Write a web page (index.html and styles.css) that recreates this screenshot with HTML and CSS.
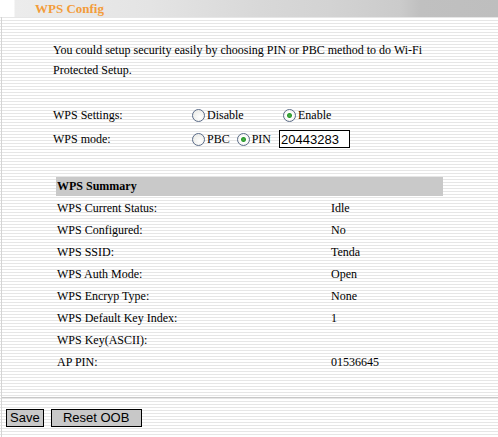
FILE: index.html
```html
<!DOCTYPE html>
<html>
<head lang="en">
    <meta charset="UTF-8">
    <title>WPS Config</title>
    <link rel="stylesheet" href="styles.css">
</head>
<body>
<div id="title">
    <span class="title-text">WPS Config</span>
</div>
<div id="main">
    <p class="intro">You could setup security easily by choosing PIN or PBC method to do Wi-Fi<br>Protected Setup.</p>
    <div class="settings">
        <div class="row">
            <span class="label">WPS Settings:</span>
            <label class="opt wide"><input type="radio" name="wps"><span>Disable</span></label>
            <label class="opt"><input type="radio" name="wps" checked><span>Enable</span></label>
        </div>
        <div class="row">
            <span class="label">WPS mode:</span>
            <label class="opt"><input type="radio" name="mode"><span>PBC</span></label>
            <label class="opt"><input type="radio" name="mode" checked><span>PIN</span></label>
            <input class="pin" type="text" value="20443283">
        </div>
    </div>
    <table class="summary">
        <tr><th colspan="2">WPS Summary</th></tr>
        <tr><td class="key">WPS Current Status:</td><td>Idle</td></tr>
        <tr><td class="key">WPS Configured:</td><td>No</td></tr>
        <tr><td class="key">WPS SSID:</td><td>Tenda</td></tr>
        <tr><td class="key">WPS Auth Mode:</td><td>Open</td></tr>
        <tr><td class="key">WPS Encryp Type:</td><td>None</td></tr>
        <tr><td class="key">WPS Default Key Index:</td><td>1</td></tr>
        <tr><td class="key">WPS Key(ASCII):</td><td></td></tr>
        <tr><td class="key">AP PIN:</td><td>01536645</td></tr>
    </table>
    <div class="buttons">
        <button class="btn">Save</button>
        <button class="btn reset">Reset OOB</button>
    </div>
</div>
</body>
</html>
```

FILE: styles.css
```css
*{
    margin: 0;
    padding: 0;
}
body{
    font-family: "Liberation Serif", "Times New Roman", serif;
    font-size: 12px;
    color: #000;
    background: repeating-linear-gradient(to bottom, #ffffff 0, #ffffff 2px, #e6e6e6 2px, #e6e6e6 3px);
    height: 437px;
    overflow: hidden;
}
#title{
    height: 17px;
    padding-left: 35px;
    background: linear-gradient(to right, #ffffff 0, #ffffff 14px, #ececec 15px, #e4e4e4 150px, #d8d8d8 260px, #d3d3d3 330px, #cbcbcb 400px, #c0c0c0 420px, #bebebe 498px);
}
.title-text{
    display: inline-block;
    font-weight: bold;
    font-size: 13px;
    line-height: 17px;
    color: #f39c3a;
}
#main{
    border-left: 1px solid #d4d4d4;
    margin-left: 1px;
    height: 420px;
}
.intro{
    padding: 23px 0 0 51px;
    line-height: 20px;
}
.settings{
    padding: 23px 0 0 51px;
}
.row{
    display: flex;
    align-items: center;
    height: 24px;
}
.label{
    width: 139px;
}
.opt{
    display: flex;
    align-items: center;
    margin-right: 7px;
}
.opt.wide{
    width: 91px;
    margin-right: 0;
}
.opt input{
    -webkit-appearance: none;
    appearance: none;
    width: 13px;
    height: 13px;
    border: 1px solid #5a6b88;
    border-radius: 50%;
    background: radial-gradient(circle at 60% 65%, #ffffff 0, #e6e6e0 100%);
    margin-right: 2px;
    box-sizing: border-box;
}
.opt input:checked{
    background: radial-gradient(circle, #4cb14c 0, #2c9a2c 2px, #ffffff 3px, #e8e8e2 100%);
}
.pin{
    width: 71px;
    height: 18px;
    box-sizing: border-box;
    border: 1px solid #000;
    font-family: "Liberation Sans", Arial, sans-serif;
    font-size: 13px;
    padding-left: 1px;
    margin-left: 1px;
    background: #fff;
}
.summary{
    margin: 26px 0 0 54px;
    width: 387px;
    border-collapse: collapse;
}
.summary th{
    background: #c9c9c9;
    height: 18px;
    text-align: left;
    padding-left: 1px;
    font-size: 12px;
    border-bottom: 2px solid transparent;
}
.summary td{
    height: 22px;
    padding-left: 1px;
}
.summary td.key{
    width: 273px;
}
.buttons{
    margin-top: 24px;
    border-top: 1px solid #c8c8c8;
    padding: 11px 0 0 4px;
    display: flex;
    gap: 7px;
}
.btn{
    font-family: "Liberation Sans", Arial, sans-serif;
    font-size: 13px;
    height: 18px;
    line-height: 16px;
    background: #c8c8c8;
    border: 1px solid #000;
    padding: 0 3px;
}
.reset{
    width: 91px;
}
```
